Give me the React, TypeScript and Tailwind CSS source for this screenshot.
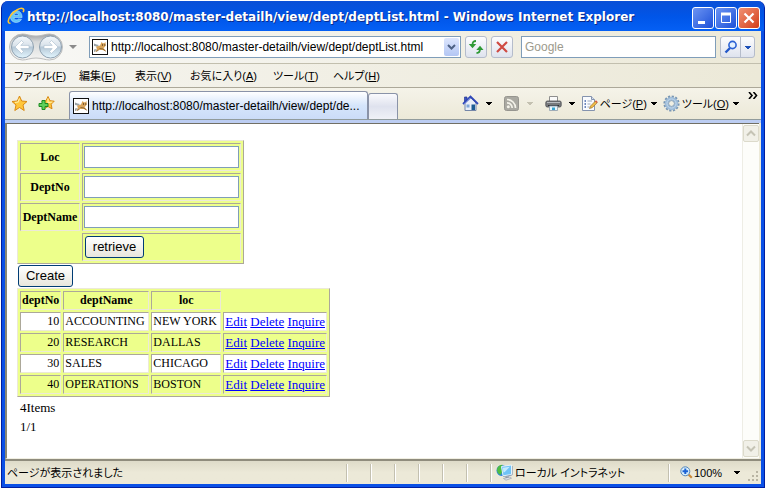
import React from "react";

const latin = "font-['Liberation_Sans','Noto_Sans_CJK_JP',sans-serif] text-[12px] leading-4";
const kana = "font-['Liberation_Sans','Noto_Sans_CJK_JP',sans-serif] text-[11px] leading-4 [font-feature-settings:'palt']";

function Caret({ color = "#000" }: { color?: string }) {
  return (
    <svg width="6" height="3" viewBox="0 0 6 3" className="shrink-0" shapeRendering="crispEdges" aria-hidden="true">
      <path d="M0 0h6v1H5v1H4v1H2V2H1V1H0z" fill={color} />
    </svg>
  );
}

function IeLogo() {
  return (
    <svg width="18" height="18" viewBox="0 0 18 18" className="shrink-0" aria-hidden="true">
      <path
        d="M14.5 12.2c-1 2.1-3 3.3-5.3 3.3-3.4 0-5.9-2.5-5.9-5.8 0-3.400 2.600-6 6-6 3.500 0 5.800 2.600 5.800 6.800H7c.1 1.400 1 2.300 2.400 2.300.9 0 1.500-.3 1.900-.9zM7.100 8.300h4.500C11.400 7 10.600 6.300 9.400 6.300 8.100 6.300 7.300 7 7.100 8.300z"
        fill="#5fc3f8"
        stroke="#c6edff"
        strokeWidth=".5"
      />
      <path d="M3.500 16.200C.2 16.500.8 12.500 3.800 8.400 7.300 3.700 13.500.2 16 1.700c1 .7.8 2.200.1 3.500" fill="none" stroke="#ffc62e" strokeWidth="1.600" />
    </svg>
  );
}

function CatIcon() {
  return (
    <svg width="16" height="16" viewBox="0 0 16 16" className="shrink-0" aria-hidden="true">
      <rect x=".5" y=".5" width="15" height="15" fill="#fff" stroke="#111" />
      <path d="M4 7.500l4-1L9.500 3l1.300 1.200h1.400L13.500 3l.3 3.500-1.300 1.800L11.500 9l3 3.500-4-1.500H7l-4.500 2 2.500-2.500z" fill="#d9a45a" />
      <path d="M2 4.500l2.500 1 2.500.5-2 1.500-3-.5z" fill="#98a1a5" />
      <path d="M2 10.500l3-.5-2.500 3H2z" fill="#98a1a5" />
      <path d="M7.500 9.500l3.500.5 2.500 2.200M6.500 11.200L4 12.500" stroke="#6b4a20" strokeWidth=".7" fill="none" />
      <path d="M10 6h1M12.300 6h1" stroke="#201408" />
    </svg>
  );
}

function NavArrows() {
  return (
    <>
      <svg width="54" height="28" viewBox="0 0 54 28" className="pointer-events-none col-start-1 row-start-1" aria-hidden="true">
        <defs>
          <linearGradient id="capsule" x1="0" y1="0" x2="0" y2="1">
            <stop offset="0" stopColor="#9b9ea1" />
            <stop offset=".3" stopColor="#d7d9da" />
            <stop offset="1" stopColor="#f5f5f3" />
          </linearGradient>
          <linearGradient id="orb" x1="0" y1="0" x2="0" y2="1">
            <stop offset="0" stopColor="#f4f8fb" />
            <stop offset=".45" stopColor="#d9e2ea" />
            <stop offset=".5" stopColor="#b5c7d6" />
            <stop offset="1" stopColor="#e4f7ff" />
          </linearGradient>
        </defs>
        <path d="M13.500 1C18 1 21 3 27 3S36 1 40.500 1a13 13 0 0 1 0 26c-4.500 0-7.500-2-13.500-2s-9 2-13.500 2a13 13 0 0 1 0-26z" fill="url(#capsule)" stroke="#bcbdbd" />
        <circle cx="13.500" cy="14" r="11" fill="url(#orb)" stroke="#8ea0b0" />
        <circle cx="41.500" cy="14" r="11" fill="url(#orb)" stroke="#8ea0b0" />
        <path d="M6 14l6.500-6.500 2 2L11.800 12.400H20v3.200h-8.200l2.700 2.900-2 2z" fill="#fff" stroke="#a7bccd" strokeWidth=".6" />
        <path d="M49 14l-6.500-6.500-2 2 2.700 2.900H35v3.200h8.200l-2.700 2.900 2 2z" fill="#fff" stroke="#a7bccd" strokeWidth=".6" />
      </svg>
      <div className="col-start-1 row-start-1 flex">
        <button aria-label="戻る" className="flex-1" />
        <button aria-label="進む" className="flex-1" />
      </div>
    </>
  );
}

function Star({ plus = false }: { plus?: boolean }) {
  return (
    <svg width="17" height="17" viewBox="0 0 17 17" aria-hidden="true">
      <path
        d={plus ? "M10 1.500l2 4.200 4.200.5-3 3 .8 4.600-4-2.300-4 2.300.8-4.600-3-3L8 5.700z" : "M8.500 1l2.200 5 5.300.5-4 3.500 1.200 5.500-4.700-3-4.700 3L5 10 1 6.500 6.300 6z"}
        fill="#ffc63a"
        stroke="#d98914"
        strokeLinejoin="round"
      />
      <path d={plus ? "M10 3.500v4l4.500-.5" : "M8.500 3.500L7 7l-3 .5"} stroke="#fff0a8" strokeWidth="1.200" fill="none" />
      {plus && <path d="M4 5.500h3v3h3v3H7v3H4v-3H1v-3h3z" fill="#5fd05b" stroke="#1d8b22" />}
    </svg>
  );
}

function HomeIcon() {
  return (
    <svg width="17" height="17" viewBox="0 0 17 17" aria-hidden="true">
      <path d="M3 8v7.500h11V8L9 3z" fill="#e9eef8" stroke="#7486a8" />
      <path d="M2.500 2h2.500v4l-2.500 2z" fill="#3d54c4" stroke="#26388f" strokeWidth=".7" />
      <path d="M1 9l7.500-7.500L16 9" fill="none" stroke="#3148b8" strokeWidth="1.800" />
      <path d="M2.500 9l6-6" stroke="#91a4ee" />
      <path d="M9.500 9.500h3.500V15H9.500z" fill="#1c5c94" />
      <path d="M4.500 9.500h3v3h-3z" fill="#7fa6d8" />
    </svg>
  );
}

function RssIcon() {
  return (
    <svg width="15" height="15" viewBox="0 0 15 15" aria-hidden="true">
      <rect x=".5" y=".5" width="14" height="14" rx="2" fill="#aaa9a2" stroke="#96958f" />
      <circle cx="4.300" cy="10.800" r="1.500" fill="#f4f3ea" />
      <path d="M3 6.800a5.200 5.200 0 0 1 5.200 5.200M3 3.500A8.500 8.500 0 0 1 11.500 12" fill="none" stroke="#f4f3ea" strokeWidth="1.700" />
    </svg>
  );
}

function PrinterIcon() {
  return (
    <svg width="17" height="17" viewBox="0 0 17 17" aria-hidden="true">
      <path d="M4.500 1.500h8v5h-8z" fill="#fafafa" stroke="#8e8e8e" />
      <rect x=".8" y="6" width="15.400" height="6" rx="1.500" fill="#77797c" stroke="#4b4d50" strokeWidth=".8" />
      <path d="M2 7.500h13" stroke="#b9bcc0" />
      <path d="M3 10.500h11" stroke="#303235" />
      <path d="M4.500 11h8v4.500h-8z" fill="#e8f4fc" stroke="#8b9ba8" strokeWidth=".8" />
      <path d="M7 12.500h3v2.500H7z" fill="#36a4cf" />
    </svg>
  );
}

function PageIcon() {
  return (
    <svg width="17" height="17" viewBox="0 0 17 17" aria-hidden="true">
      <path d="M1.500 1.500h9l3 3v11h-12z" fill="#f9fbfe" stroke="#8493ae" />
      <path d="M10.500 1.500v3h3" fill="#d5deee" stroke="#8493ae" />
      <path d="M3.500 6h1.500M3.500 9h1.500M3.500 12h1.500" stroke="#4264a8" strokeWidth="1.500" />
      <path d="M6.500 6h4.500M6.500 9h3M6.500 12h2" stroke="#9aa6bb" />
      <path d="M8.500 13.500l1-2.500 5-5 1.700 1.700-5 5z" fill="#f0bc47" stroke="#98702e" strokeWidth=".7" />
      <path d="M14 6.200l1-1 1.700 1.700-1 1z" fill="#d9573e" />
    </svg>
  );
}

function GearIcon() {
  return (
    <svg width="17" height="17" viewBox="0 0 17 17" aria-hidden="true">
      <circle cx="8.500" cy="8.500" r="7" fill="none" stroke="#7896b4" strokeWidth="2.200" strokeDasharray="2.200 1.460" />
      <circle cx="8.500" cy="8.500" r="4.800" fill="none" stroke="#9dbbd8" strokeWidth="3.600" />
      <circle cx="8.500" cy="8.500" r="4.600" fill="none" stroke="#c1d8ed" strokeWidth="1" />
      <circle cx="8.500" cy="8.500" r="2.900" fill="#f0efe3" stroke="#6f91b3" strokeWidth=".8" />
    </svg>
  );
}

function GlobeIcon() {
  return (
    <svg width="17" height="17" viewBox="0 0 17 17" className="shrink-0" aria-hidden="true">
      <circle cx="6" cy="6.500" r="5.500" fill="#2f86d8" />
      <path d="M1 5c1-3 3-4.300 5.500-4.300L5 4 6.500 7l-2 4C2 10 .8 8 1 5z" fill="#4fbd43" />
      <path d="M15.500 1.500l1 .7v8.600l-1.500 1-8 1V11z" fill="#6c83a6" />
      <path d="M5.500 2.500L15.500 1v9.500L7 11.800z" fill="#6fc3f7" stroke="#e5f2fa" strokeWidth="1" />
      <path d="M6.800 3.800l7-1.100-5 5.300-1.300.5z" fill="#c4ebff" />
      <path d="M9.500 12.500h3.500v2h-3.500z" fill="#7f8ca2" />
      <path d="M7.500 14.500l6.500-1.500 1.500 1.200-5.500 2z" fill="#e2e6ec" stroke="#8c96a5" strokeWidth=".6" />
    </svg>
  );
}

function ZoomIcon() {
  return (
    <svg width="13" height="13" viewBox="0 0 13 13" className="shrink-0" aria-hidden="true">
      <path d="M8.500 8.500l3.300 3.300" stroke="#c98a3a" strokeWidth="2.200" />
      <circle cx="5.300" cy="5.300" r="4.500" fill="#d8effc" stroke="#5585b6" />
      <path d="M5.300 2.500v5.600M2.500 5.300h5.600" stroke="#1a62d4" strokeWidth="2" />
    </svg>
  );
}

function ToolButton({ label, children }: { label: string; children: React.ReactNode }) {
  return (
    <button aria-label={label} className="grid h-[22px] w-[22px] shrink-0 place-items-center rounded-[3px] border border-[#b5bccb] bg-linear-to-b from-[#fdfdfe] to-[#dfe3ee]">
      {children}
    </button>
  );
}

const winButton = "grid h-[22px] w-[22px] place-items-center rounded-[3px] border border-white bg-linear-to-br";

function TitleBar() {
  return (
    <header className="flex h-[30px] shrink-0 items-center rounded-t-[7px] bg-linear-to-b from-[#0a4fd6] via-[#0055e8] to-[#0560f5] pr-1 pl-[5px]">
      <IeLogo />
      <h1 className="ml-0.5 min-w-0 flex-1 truncate pt-0.5 font-['DejaVu_Sans','Noto_Sans_CJK_JP',sans-serif] text-[12px] leading-4 font-bold text-white [text-shadow:1px_1px_0_#0a2b8c]">
        http://localhost:8080/master-detailh/view/dept/deptList.html - Windows Internet Explorer
      </h1>
      <div className="flex gap-px pt-[3px]">
        <button aria-label="最小化" className={`${winButton} from-[#6c93f2] to-[#1d4fd8]`}>
          <svg width="14" height="14" aria-hidden="true"><path d="M2 10h7v3H2z" fill="#fff" /></svg>
        </button>
        <button aria-label="最大化" className={`${winButton} from-[#6c93f2] to-[#1d4fd8]`}>
          <svg width="14" height="14" aria-hidden="true"><path d="M2.500 3v8.500h9V3" fill="none" stroke="#fff" /><path d="M2 3h10" stroke="#fff" strokeWidth="3" /></svg>
        </button>
        <button aria-label="閉じる" className={`${winButton} from-[#f09072] to-[#d23a10]`}>
          <svg width="14" height="14" aria-hidden="true"><path d="M2.500 2.500l9 9M11.500 2.500l-9 9" stroke="#fff" strokeWidth="2.200" /></svg>
        </button>
      </div>
    </header>
  );
}

function AddressBar() {
  return (
    <div className="flex h-8 shrink-0 items-center bg-linear-to-r from-[#f8f8f6] to-[#ece9d8] pr-1.5 pl-1">
      <div className="grid shrink-0"><NavArrows /></div>
      <button aria-label="履歴" className="mr-[11px] ml-[5px] shrink-0 p-px">
        <svg width="8" height="4" aria-hidden="true"><path d="M0 0h8L4 4z" fill="#8b8b8b" /></svg>
      </button>
      <div className="flex h-[22px] min-w-0 flex-1 items-center border border-[#7f9db9] bg-white pl-0.5">
        <CatIcon />
        <input aria-label="アドレス" defaultValue="http://localhost:8080/master-detailh/view/dept/deptList.html" className={`${latin} ml-[3px] h-4 min-w-0 flex-1 outline-none`} />
        <button aria-label="アドレス一覧" className="mr-px grid h-[18px] w-[15px] shrink-0 place-items-center rounded-[2px] bg-linear-to-b from-[#dde6fd] to-[#b3c6f4]">
          <svg width="9" height="6" aria-hidden="true"><path d="M1 1l3.500 3.500L8 1" fill="none" stroke="#4d6185" strokeWidth="2" /></svg>
        </button>
      </div>
      <div className="ml-1 flex gap-1">
        <ToolButton label="更新">
          <svg width="16" height="16" aria-hidden="true">
            <path d="M8 2C5.500 2 4.500 3 4.500 6M8.500 14c2.500 0 3.500-1 3.500-4" fill="none" stroke="#2f9a35" strokeWidth="1.800" />
            <path d="M.8 5h7.400L4.500 9.300zM8.300 11h7.200L12 6.800z" fill="#2f9a35" />
          </svg>
        </ToolButton>
        <ToolButton label="中止">
          <svg width="14" height="14" aria-hidden="true"><path d="M2 2l10 10M12 2L2 12" stroke="#cf4a43" strokeWidth="2.200" /></svg>
        </ToolButton>
      </div>
      <input aria-label="検索" placeholder="Google" className={`${latin} ml-2 h-[22px] w-[195px] min-w-0 border border-[#7f9db9] bg-white px-[3px] outline-none placeholder:text-[#9c9a8c]`} />
      <div className="ml-1 flex h-[22px] shrink-0 rounded-[3px] border border-[#b5bccb] bg-linear-to-b from-[#fdfdfe] to-[#dfe3ee]">
        <button aria-label="検索する" className="grid w-5 place-items-center border-r border-[#b5bccb]">
          <svg width="14" height="14" aria-hidden="true"><path d="M6 8l-4.500 4.500" stroke="#2458c8" strokeWidth="2.400" /><circle cx="8.500" cy="5" r="3.600" fill="#e5f2ff" stroke="#2c62d4" strokeWidth="1.600" /></svg>
        </button>
        <button aria-label="検索オプション" className="grid w-[13px] place-items-center"><Caret color="#1d50b8" /></button>
      </div>
    </div>
  );
}

const menus = [
  { text: "ファイル", key: "F", w: "w-[65px]" },
  { text: "編集", key: "E", w: "w-14" },
  { text: "表示", key: "V", w: "w-[55px]" },
  { text: "お気に入り", key: "A", w: "w-[83px]" },
  { text: "ツール", key: "T", w: "w-[60px]" },
  { text: "ヘルプ", key: "H", w: "w-[60px]" },
];

function MenuBar() {
  return (
    <nav className="flex h-6 shrink-0 items-center border-t border-[#c2bfae] bg-linear-to-r from-[#f5f4ef] to-[#ece9d8] pl-[9px]">
      {menus.map((m) => (
        <button key={m.key} className={`${kana} ${m.w} text-left whitespace-nowrap`}>
          {m.text}(<span className="underline">{m.key}</span>)
        </button>
      ))}
    </nav>
  );
}

function TabBar() {
  return (
    <div className="flex h-[33px] shrink-0 items-end border-t border-b border-t-[#aca899] border-b-[#919b9c] bg-linear-to-b from-[#f5f3e9] to-[#ece9d8]">
      <div className="flex gap-2.5 pb-[7px] pl-1.5">
        <button aria-label="お気に入りセンター"><Star /></button>
        <button aria-label="お気に入りに追加"><Star plus /></button>
      </div>
      <button className="ml-3.5 flex h-7 w-[299px] items-center rounded-t-[3px] border border-b-0 border-[#8a93a8] bg-linear-to-b from-white via-[#d5e5fb] to-[#cbdcf8] pr-1 pl-[3px]">
        <CatIcon />
        <span className={`${latin} ml-[3px] min-w-0 text-left whitespace-nowrap`}>http://localhost:8080/master-detailh/view/dept/de...</span>
      </button>
      <button aria-label="新しいタブ" className="h-[26px] w-[30px] shrink-0 rounded-t-[3px] border border-b-0 border-[#8a93a8] bg-linear-to-b from-[#fafafd] via-[#dfe2ee] to-[#f0f1f7]" />
      <div className="ml-auto flex shrink-0 items-center gap-1.5 self-center">
        <button aria-label="ホーム" className="flex items-center gap-[7px]"><HomeIcon /><Caret /></button>
        <button aria-label="フィード" className="ml-1.5 flex items-center gap-2"><RssIcon /><Caret color="#c4c1b1" /></button>
        <button aria-label="印刷" className="ml-1.5 flex items-center gap-[7px]"><PrinterIcon /><Caret /></button>
        <button className="flex items-center"><PageIcon /><span className={`${kana} mr-1 ml-0.5 text-left whitespace-nowrap`}>ページ(<span className="underline">P</span>)</span><Caret /></button>
        <button className="flex items-center"><GearIcon /><span className={`${kana} mr-1 ml-0.5 text-left whitespace-nowrap`}>ツール(<span className="underline">O</span>)</span><Caret /></button>
      </div>
      <button aria-label="その他" className="mr-[3px] ml-[9px] shrink-0 self-start pt-1">
        <svg width="10" height="7" aria-hidden="true"><path d="M1 0l3 3.500L1 7M5.500 0l3 3.500-3 3.500" fill="none" stroke="#000" strokeWidth="1.600" /></svg>
      </button>
    </div>
  );
}

const cell = "border border-t-[#aca899] border-l-[#aca899] border-r-[#ece9d8] border-b-[#ece9d8] p-px";
const frame = "border-separate border-spacing-[2px] border border-t-[#ece9d8] border-l-[#ece9d8] border-r-[#aca899] border-b-[#aca899] bg-[#edff8b] text-[12px] leading-[15px]";
const xpButton = "h-[22px] rounded-[3px] border border-[#003c74] bg-linear-to-b from-white to-[#e8e6dc] font-['Liberation_Sans',sans-serif] text-[13px] leading-4";

const fields = [
  { id: "loc", label: "Loc" },
  { id: "deptNo", label: "DeptNo" },
  { id: "deptName", label: "DeptName" },
];

const depts = [
  { no: 10, name: "ACCOUNTING", loc: "NEW YORK" },
  { no: 20, name: "RESEARCH", loc: "DALLAS" },
  { no: 30, name: "SALES", loc: "CHICAGO" },
  { no: 40, name: "OPERATIONS", loc: "BOSTON" },
];

function DeptPage() {
  return (
    <main className="min-w-0 flex-1 bg-white pt-4 pl-2.5 font-['Liberation_Serif',serif] text-[13px] leading-[19px] text-black">
      <form onSubmit={(e) => e.preventDefault()}>
        <table className={frame}>
          <tbody>
            {fields.map((f) => (
              <tr key={f.id} className="h-7">
                <th className={`${cell} w-[60px]`}><label htmlFor={f.id}>{f.label}</label></th>
                <td className={cell}><input id={f.id} className="block h-[22px] w-[155px] border border-[#7f9db9] bg-white px-1 outline-none" /></td>
              </tr>
            ))}
            <tr className="h-7">
              <th />
              <td className={cell}><button className={`${xpButton} ml-px block w-[59px]`}>retrieve</button></td>
            </tr>
          </tbody>
        </table>
      </form>
      <button className={`${xpButton} my-px ml-px block w-[55px]`}>Create</button>
      <table className={frame}>
        <thead>
          <tr>
            <th className={`${cell} w-[41px]`}>deptNo</th>
            <th className={`${cell} w-[86px]`}>deptName</th>
            <th className={`${cell} w-[70px]`}>loc</th>
            <th />
          </tr>
        </thead>
        <tbody>
          {depts.map((d) => (
            <tr key={d.no} className="odd:bg-white">
              <td className={`${cell} text-right`}>{d.no}</td>
              <td className={cell}>{d.name}</td>
              <td className={`${cell} whitespace-nowrap`}>{d.loc}</td>
              <td className={`${cell} text-[13px] leading-[15px] whitespace-nowrap text-[#0000ff]`}>
                <a href="#edit" className="underline">Edit</a> <a href="#delete" className="underline">Delete</a> <a href="#inquire" className="underline">Inquire</a>
              </td>
            </tr>
          ))}
        </tbody>
      </table>
      <p className="mt-px pl-[3px]">4Items</p>
      <p className="pl-[3px]">1/1</p>
    </main>
  );
}

function ScrollBar() {
  const button = "grid h-[17px] w-4 place-items-center rounded-[2px] border border-[#dcdacb] bg-[#f1f0e8]";
  return (
    <div className="flex w-[17px] shrink-0 flex-col justify-between border-l border-[#eeede5] bg-[#fdfdfa] py-px">
      <button aria-label="上へ" className={button}><svg width="10" height="7" aria-hidden="true"><path d="M1 5.500l4-4 4 4" fill="none" stroke="#c5c3b5" strokeWidth="2" /></svg></button>
      <button aria-label="下へ" className={button}><svg width="10" height="7" aria-hidden="true"><path d="M1 1.500l4 4 4-4" fill="none" stroke="#c5c3b5" strokeWidth="2" /></svg></button>
    </div>
  );
}

function StatusBar() {
  const pane = "h-[18px] w-6 shrink-0 border-l border-[#c3c0b0] shadow-[inset_1px_0_0_#fff]";
  return (
    <footer className={`${kana} flex h-[23px] shrink-0 items-center bg-linear-to-b from-[#dedbc9] via-[#ece9d8] to-[#ece9d8]`}>
      <span className="min-w-0 flex-1 truncate pl-0.5">ページが表示されました</span>
      {[0, 1, 2, 3, 4, 5].map((i) => <span key={i} className={pane} />)}
      <div className="flex h-[18px] w-[178px] shrink-0 items-center border-l border-[#c3c0b0] pl-[5px] shadow-[inset_1px_0_0_#fff]">
        <GlobeIcon /><span className="ml-0.5">ローカル イントラネット</span>
      </div>
      <div className="flex h-[18px] w-[93px] shrink-0 items-center border-l border-[#c3c0b0] pl-[11px] shadow-[inset_1px_0_0_#fff]">
        <button className="flex items-center"><ZoomIcon /><span className="mr-3 ml-px w-7 text-left">100%</span><Caret /></button>
        <svg width="11" height="11" viewBox="0 0 11 11" className="mr-0.5 ml-auto self-end" aria-hidden="true">
          <path d="M8 0h2v2H8zM4 4h2v2H4zM8 4h2v2H8zM0 8h2v2H0zM4 8h2v2H4zM8 8h2v2H8z" fill="#b8b4a3" />
        </svg>
      </div>
    </footer>
  );
}

export default function App() {
  return (
    <div className="flex min-h-screen flex-col bg-white p-px text-black">
      <div className="flex flex-1 flex-col rounded-t-[7px] border border-t-0 border-[#001ea0] bg-[#0a50e6]">
        <TitleBar />
        <div className="mx-[3px] mb-[3px] flex flex-1 flex-col bg-[#ece9d8]">
          <AddressBar />
          <MenuBar />
          <TabBar />
          <div className="h-[3px] shrink-0 bg-[#bccdf2]" />
          <div className="mr-0.5 flex flex-1 border-t border-b border-l-2 border-t-[#716f64] border-b-[#f1efe2] border-l-[#8a8775]">
            <DeptPage />
            <ScrollBar />
          </div>
          <div className="h-0.5 shrink-0 bg-[#8f8c7d]" />
          <StatusBar />
        </div>
      </div>
    </div>
  );
}
